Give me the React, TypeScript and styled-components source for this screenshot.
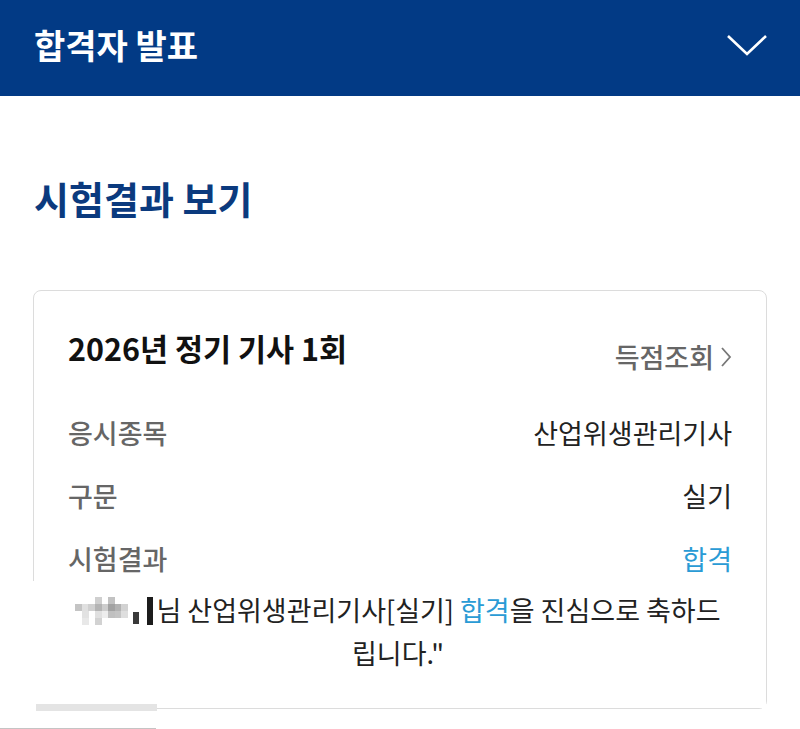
import React from 'react';
import styled, { createGlobalStyle } from 'styled-components';

const GlobalStyle = createGlobalStyle`
  * { box-sizing: border-box; }
  html, body { margin: 0; padding: 0; background: #ffffff; }
  body {
    font-family: "Noto Sans CJK KR", "Noto Sans", sans-serif;
    color: #222222;
  }
`;

const TopBar = styled.header`
  display: flex;
  align-items: center;
  justify-content: space-between;
  height: 96px;
  padding: 0 32px 6px 34px;
  background: #023a85;
`;

const TopTitle = styled.h1`
  margin: 0;
  font-size: 34px;
  line-height: 44px;
  font-weight: 700;
  color: #ffffff;
`;

const Page = styled.main`
  padding: 80px 33px 0;
`;

const SectionTitle = styled.h2`
  margin: 0 0 70px 1px;
  font-size: 38px;
  line-height: 44px;
  font-weight: 700;
  color: #0b3a7e;
`;

const Card = styled.section`
  border: 1.5px solid #dcdcdc;
  border-radius: 8px;
  padding-top: 38px;
`;

const CardHead = styled.div`
  display: flex;
  align-items: flex-start;
  justify-content: space-between;
  padding: 0 34px;
`;

const CardTitle = styled.h3`
  margin: 0;
  font-size: 30.5px;
  line-height: 38px;
  font-weight: 700;
  color: #111111;
`;

const ScoreLink = styled.a`
  display: flex;
  align-items: center;
  gap: 6px;
  margin-top: 9px;
  font-size: 27px;
  line-height: 38px;
  font-weight: 500;
  color: #666666;
  text-decoration: none;
`;

const InfoList = styled.dl`
  display: flex;
  flex-direction: column;
  gap: 25px;
  margin: 38px 0 0;
  padding: 0 34px;
`;

const InfoRow = styled.div`
  display: flex;
  justify-content: space-between;
  font-size: 27px;
  line-height: 38px;
`;

const Label = styled.dt`
  color: #666666;
  font-weight: 500;
`;

const Value = styled.dd<{ $accent?: boolean }>`
  margin: 0;
  color: ${({ $accent }) => ($accent ? '#2a9bd5' : '#222222')};
`;

const Notice = styled.div`
  position: relative;
  margin: 3px 0 0 -4px;
  padding: 7px 10px 34px;
  background: #ffffff;
  text-align: center;
  font-size: 27px;
  line-height: 43px;
  color: #222222;
`;

const Mosaic = styled.svg`
  display: inline-block;
  vertical-align: -4px;
  margin-right: 1px;
`;

const Accent = styled.span`
  color: #2a9bd5;
`;

const ScrollThumb = styled.div`
  position: absolute;
  left: 6px;
  bottom: -3px;
  width: 121px;
  height: 7px;
  background: #e4e4e4;
`;

const BottomRule = styled.div`
  width: 156px;
  height: 1px;
  margin: 19px 0 0 -33px;
  background: #c4c4c4;
`;

const mosaicCells: [number, number, string][] = [
  [20, 0, '#cfcfcf'], [33, 0, '#c2c2c2'],
  [0, 7, '#c4c4c4'], [7, 7, '#e0e0e0'], [13, 7, '#d0d0d0'], [20, 7, '#b4b4b4'],
  [27, 7, '#cdcdcd'], [33, 7, '#a2a2a2'], [40, 7, '#b2b2b2'], [46, 7, '#d2d2d2'],
  [7, 14, '#e2e2e2'], [20, 14, '#e0e0e0'], [27, 14, '#ededed'], [33, 14, '#c0c0c0'],
  [40, 14, '#c4c4c4'], [46, 14, '#dedede'],
  [7, 21, '#e8e8e8'], [20, 21, '#d2d2d2'],
];

const NameMosaic = () => (
  <Mosaic width="80" height="28" viewBox="0 0 80 28">
    {mosaicCells.map(([x, y, c], i) => (
      <rect key={i} x={x} y={y} width="7" height="7" fill={c} />
    ))}
    <rect x="58" y="15" width="6" height="12" fill="#3a3a3a" />
    <rect x="72" y="0" width="6" height="28" fill="#1c1c1c" />
  </Mosaic>
);

export default function App() {
  return (
    <>
      <GlobalStyle />
      <TopBar>
        <TopTitle>합격자 발표</TopTitle>
        <svg width="42" height="24" viewBox="0 0 42 24" fill="none">
          <polyline points="2,3 21,21 40,3" stroke="#ffffff" strokeWidth="2.6" />
        </svg>
      </TopBar>
      <Page>
        <SectionTitle>시험결과 보기</SectionTitle>
        <Card>
          <CardHead>
            <CardTitle>2026년 정기 기사 1회</CardTitle>
            <ScoreLink href="#">
              득점조회
              <svg width="12" height="22" viewBox="0 0 12 22" fill="none">
                <polyline points="2,2 10,11 2,20" stroke="#777777" strokeWidth="1.8" />
              </svg>
            </ScoreLink>
          </CardHead>
          <InfoList>
            <InfoRow>
              <Label>응시종목</Label>
              <Value>산업위생관리기사</Value>
            </InfoRow>
            <InfoRow>
              <Label>구문</Label>
              <Value>실기</Value>
            </InfoRow>
            <InfoRow>
              <Label>시험결과</Label>
              <Value $accent>합격</Value>
            </InfoRow>
          </InfoList>
          <Notice>
            <NameMosaic />님 산업위생관리기사[실기] <Accent>합격</Accent>을 진심으로 축하드
            <br />
            립니다."
            <ScrollThumb />
          </Notice>
        </Card>
        <BottomRule />
      </Page>
    </>
  );
}
